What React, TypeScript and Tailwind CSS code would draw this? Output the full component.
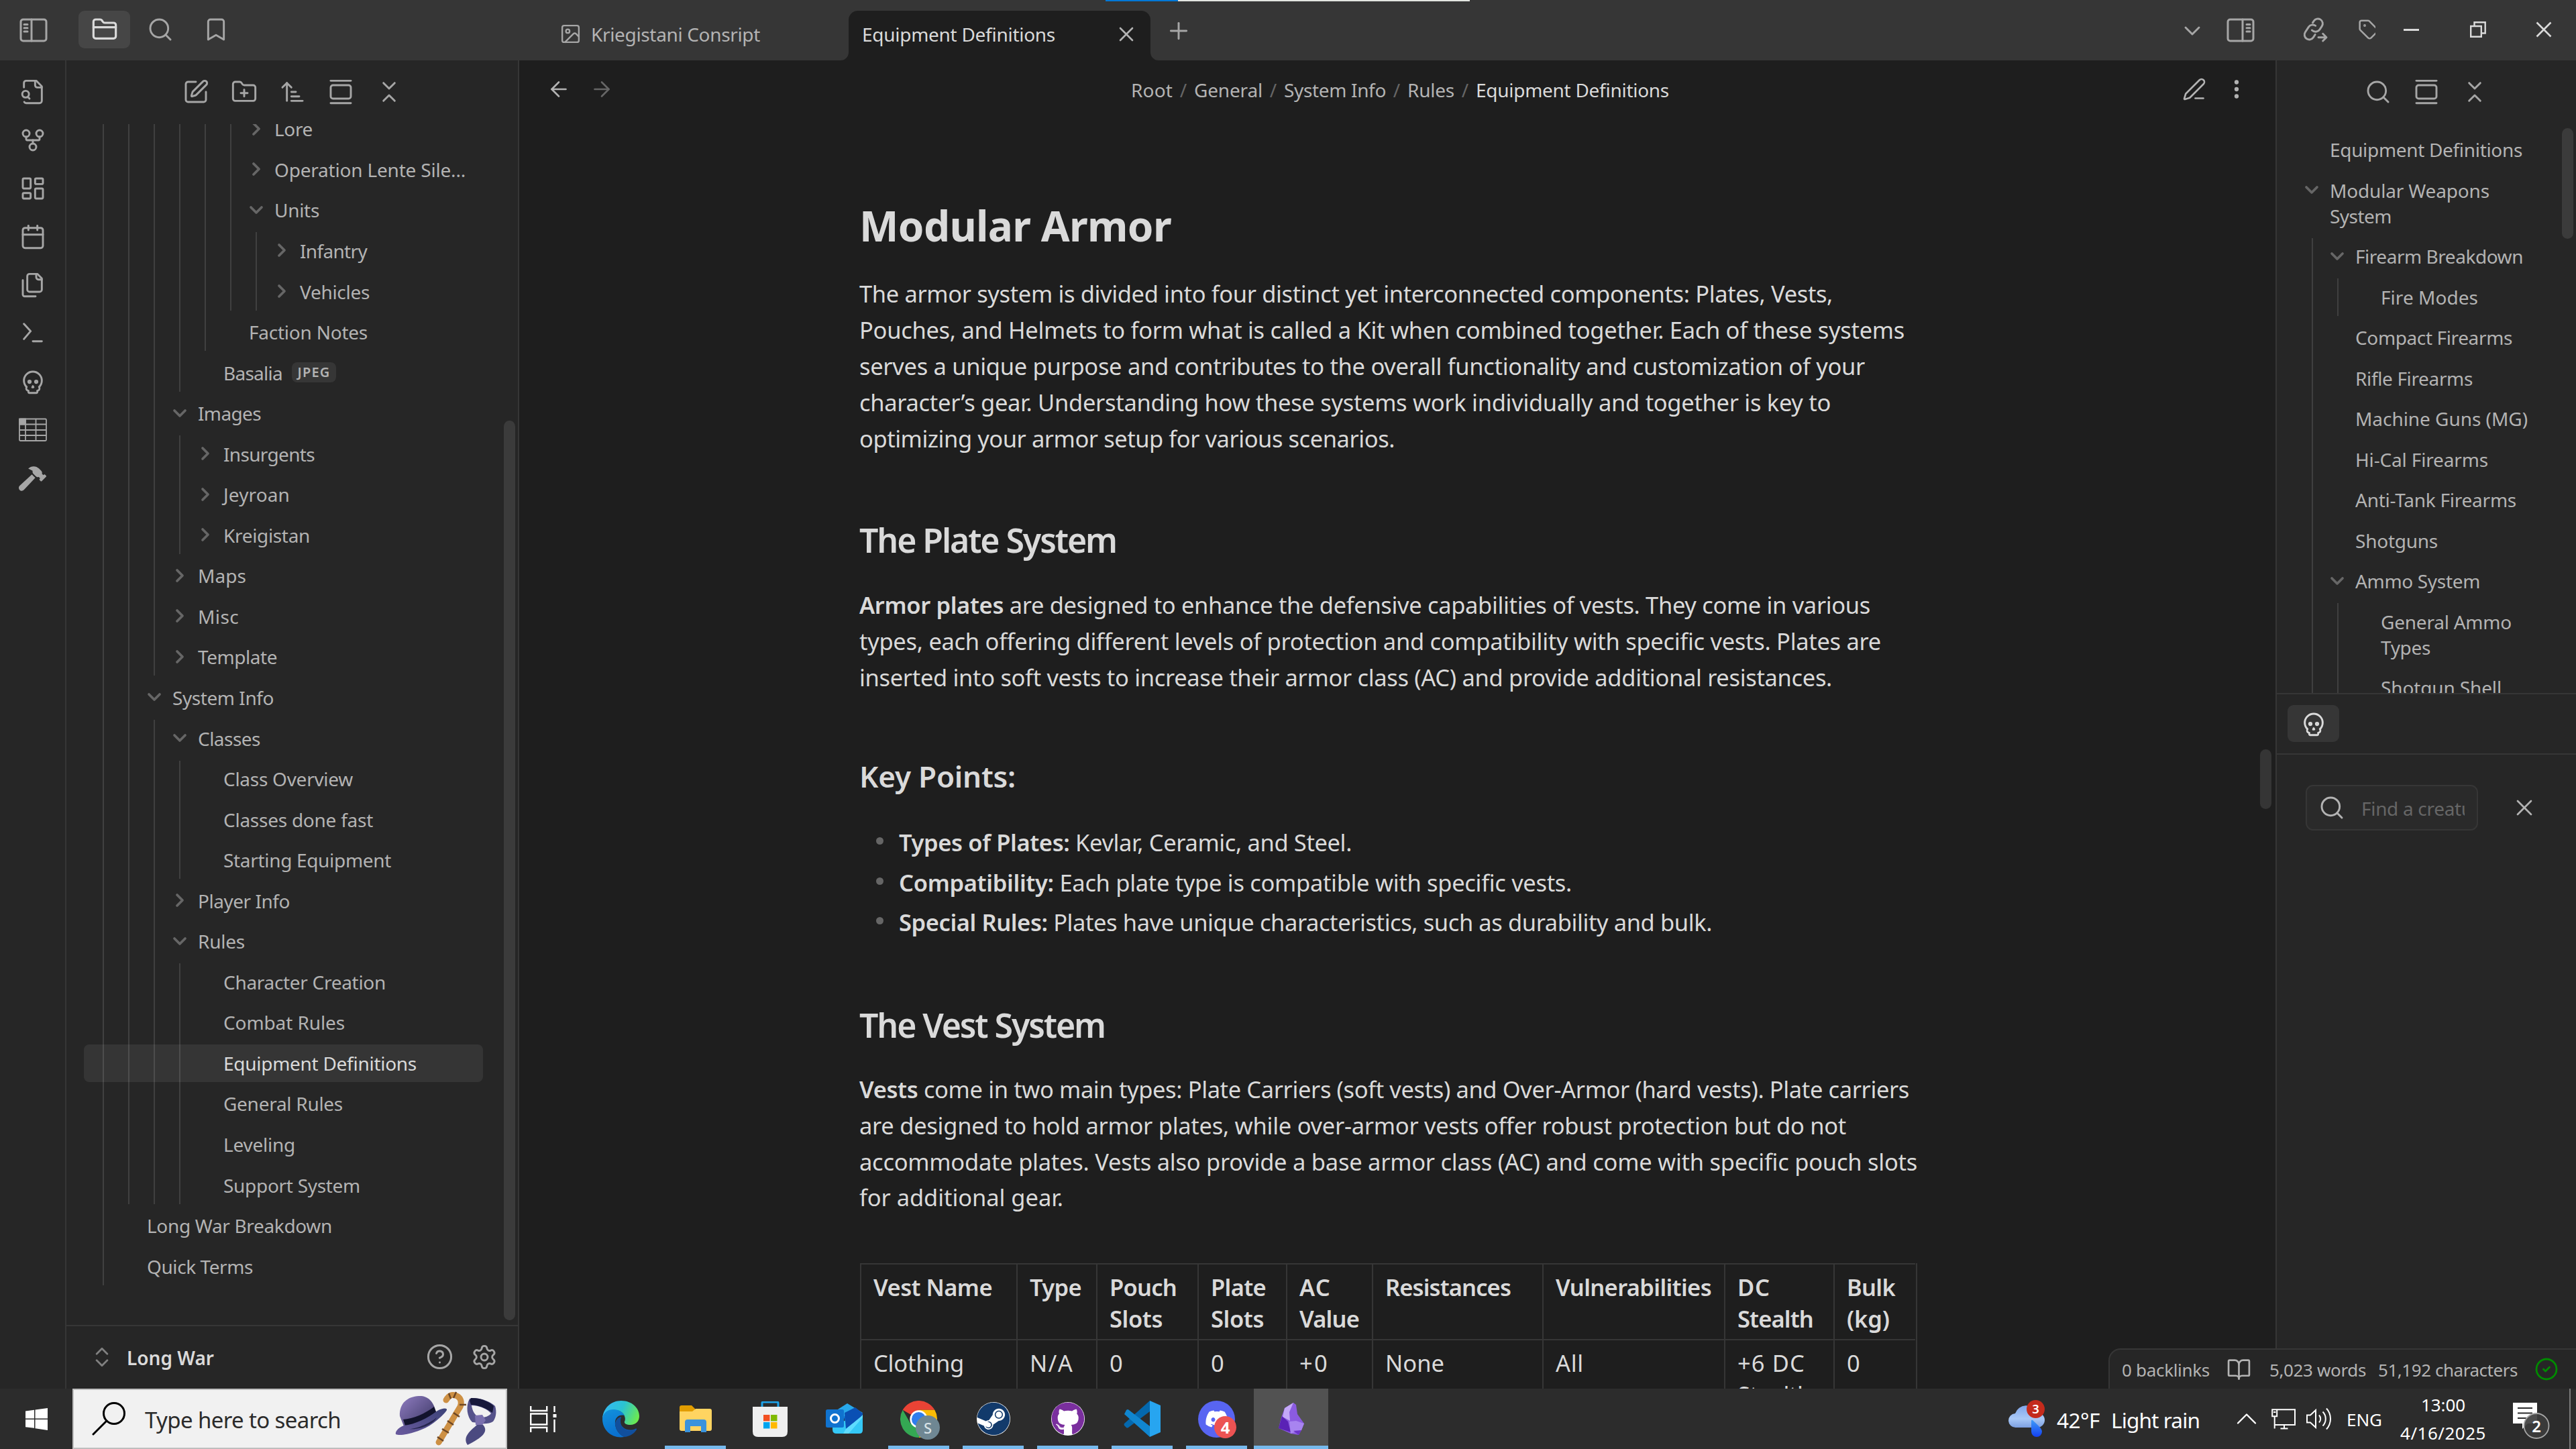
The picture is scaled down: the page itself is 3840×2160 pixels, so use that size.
import React, { useLayoutEffect, useRef, useState } from "react";
import {
  ArrowLeft, ArrowRight, ArrowUpNarrowWide, BookOpen, Bookmark, Calendar, ChevronDown, ChevronRight, ChevronUp,
  ChevronsDownUp, ChevronsUpDown, CircleCheck, CircleHelp, EllipsisVertical, FolderClosed, FolderPlus,
  GalleryVertical, GitFork, Image, LayoutDashboard, PenLine, Plus, Search, Settings, Skull, SquarePen, Tag, X,
} from "lucide-react";
import { FaDiscord, FaGithub, FaHammer, FaSteam } from "react-icons/fa";

type Kids = { children?: React.ReactNode };

/* A single line of text whose tracking is adjusted so that it fills `w` pixels. */
function Fit({ w, className = "", children }: Kids & { w: number; className?: string }) {
  const ref = useRef<HTMLSpanElement>(null);
  const [spacing, setSpacing] = useState(0);
  useLayoutEffect(() => {
    const el = ref.current;
    if (!el) return;
    el.style.letterSpacing = "0px";
    const natural = el.getBoundingClientRect().width;
    const next = (w - natural) / Math.max(1, (el.textContent ?? "").length);
    el.style.letterSpacing = `${next}px`;
    setSpacing(next);
  }, [w]);
  return (
    <span ref={ref} className={`inline-block whitespace-pre ${className}`} style={{ letterSpacing: `${spacing}px` }}>
      {children}
    </span>
  );
}

function Stroke({ size = 40, sw = 1.75, children }: Kids & { size?: number; sw?: number }) {
  return (
    <svg width={size} height={size} viewBox="0 0 24 24" fill="none" stroke="currentColor" strokeWidth={sw} strokeLinecap="round" strokeLinejoin="round">
      {children}
    </svg>
  );
}

function Cell({ className = "", children }: Kids & { className?: string }) {
  return <div className={`flex shrink-0 items-center justify-center ${className}`}>{children}</div>;
}

function PanelIcon({ right = false }: { right?: boolean }) {
  return (
    <svg width="42" height="36" viewBox="0 0 42 36" fill="none" stroke="currentColor" strokeWidth="3" strokeLinecap="round" className={right ? "-scale-x-100" : ""}>
      <rect x="2" y="2" width="38" height="32" rx="3.5" />
      <path d="M18 2v32M7 9.5h5M7 14.8h5M7 20h5" />
    </svg>
  );
}

/* ---------- title bar ---------- */

function TitleBar() {
  return (
    <header className="relative flex h-[90px] shrink-0 bg-[#363636] text-[#a6a6a6]">
      <div className="flex w-[774px] shrink-0 items-start pt-4">
        <Cell className="h-[58px] w-[99px]"><PanelIcon /></Cell>
        <div className="ml-[18px] flex gap-[6px]">
          <Cell className="h-14 w-[77px] rounded-[9px] bg-[#464646] text-[#dadada]"><FolderClosed size={40} strokeWidth={1.9} /></Cell>
          <Cell className="h-14 w-[77px]"><Search size={40} strokeWidth={1.75} /></Cell>
          <Cell className="h-14 w-[77px]"><Bookmark size={40} strokeWidth={1.75} /></Cell>
        </div>
      </div>
      <div className="flex items-start pt-4">
        <div className="flex h-[74px] w-[491px] items-center gap-[14px] pb-[5px] pl-[60px]">
          <Image size={33} strokeWidth={1.75} />
          <Fit w={252} className="pt-[1px] text-[28px] text-[#b3b3b3]">Kriegistani Consript</Fit>
        </div>
        <div className="relative flex h-[74px] w-[450px] items-center justify-between rounded-t-[14px] bg-[#1e1e1e] pr-[18px] pb-[5px] pl-[20px]">
          <Fit w={288} className="pt-[1px] text-[28px] text-[#dadada]">Equipment Definitions</Fit>
          <X size={36} strokeWidth={1.75} className="text-[#b3b3b3]" />
          <svg width="12" height="12" viewBox="0 0 12 12" className="absolute bottom-0 -left-3"><path d="M12 0v12H0A12 12 0 0 0 12 0Z" fill="#1e1e1e" /></svg>
          <svg width="12" height="12" viewBox="0 0 12 12" className="absolute -right-3 bottom-0"><path d="M0 0v12h12A12 12 0 0 1 0 0Z" fill="#1e1e1e" /></svg>
        </div>
        <Cell className="h-[60px] w-[84px]"><Plus size={40} strokeWidth={1.75} /></Cell>
      </div>
      <div className="ml-auto flex items-start pt-4">
        <Cell className="h-[60px] w-[72px]"><ChevronDown size={40} strokeWidth={1.75} /></Cell>
        <Cell className="mr-[39px] h-[58px] w-[72px]"><PanelIcon right /></Cell>
        <Cell className="mr-[28px] h-14 w-[72px]">
          <Stroke size={40}>
            <path d="M9.2 12.6a4.6 4.6 0 0 0 6.9-.5l2-3a4.3 4.3 0 1 0-7.2-4.7l-1 1.5" />
            <path d="M12.4 8.6a4.4 4.4 0 0 0-6.2 1.2l-3 4.6a4.3 4.3 0 0 0 7.2 4.7l1.7-2.6" />
            <path d="M15 19h7m-3-3.2 3.2 3.2-3.2 3.2" />
          </Stroke>
        </Cell>
        <div className="flex h-14 w-[26px] shrink-0 items-center overflow-hidden"><Tag size={32} strokeWidth={1.9} className="shrink-0" /></div>
        <Cell className="ml-[3px] h-14 w-[100px]"><div className="h-[3px] w-[23px] bg-[#dadada]" /></Cell>
        <Cell className="h-14 w-[99px]">
          <svg width="24" height="24" viewBox="0 0 24 24" fill="none" stroke="#dadada" strokeWidth="2.4"><path d="M1.2 7h15.6v15.8H1.2ZM6.5 7V1.3h16.2V17.500H17" /></svg>
        </Cell>
        <Cell className="h-14 w-[97px]">
          <svg width="24" height="24" viewBox="0 0 24 24" fill="none" stroke="#dadada" strokeWidth="2.600"><path d="m1.500 1.500 21 21m0-21-21 21" /></svg>
        </Cell>
      </div>
      <div className="absolute top-0 left-[1648px] flex h-[2px] w-[543px] bg-[#e3e5e1]"><div className="w-[108px] bg-[#0078d7]" /></div>
    </header>
  );
}

/* ---------- ribbon ---------- */

function Ribbon() {
  const icons = [
    <Stroke key="fs">
      <path d="M14 2v4a2 2 0 0 0 2 2h4" /><path d="M4.268 21a2 2 0 0 0 1.727 1H18a2 2 0 0 0 2-2V7l-5-5H6a2 2 0 0 0-2 2v4" />
      <path d="m9 18-1.500-1.500" /><circle cx="5.500" cy="14" r="3" />
    </Stroke>,
    <GitFork key="gf" size={40} strokeWidth={1.75} />,
    <LayoutDashboard key="ld" size={40} strokeWidth={1.75} />,
    <Calendar key="ca" size={40} strokeWidth={1.75} />,
    <Stroke key="fi">
      <path d="M20 7h-3a2 2 0 0 1-2-2V2" /><path d="M9 18a2 2 0 0 1-2-2V4a2 2 0 0 1 2-2h7l4 4v10a2 2 0 0 1-2 2Z" /><path d="M3 7.600v12.800A1.600 1.600 0 0 0 4.600 22h9.800" />
    </Stroke>,
    <Stroke key="te"><path d="m4 17 6-7-6-6.500M12 19h8" /></Stroke>,
    <Skull key="sk" size={40} strokeWidth={1.75} />,
    <svg key="tb" width="42" height="36" viewBox="0 0 42 36" fill="none" stroke="currentColor" strokeWidth="1.800">
      <rect x="1" y="1.500" width="40" height="32.500" rx="1.500" />
      <path d="M1 9.500h40M1 18h40M1 26h40M10 1.500v32.500M25.500 1.500v32.500" />
      <path d="M1 1.500h9v8H1Z" fill="currentColor" />
    </svg>,
    <FaHammer key="ha" size={41} />,
  ];
  return (
    <nav className="flex w-[99px] shrink-0 flex-col border-r-2 border-[#363636] bg-[#262626] pt-[11px] text-[#a6a6a6]">
      {icons.map((icon, i) => <Cell key={i} className="h-[72px] w-[97px]">{icon}</Cell>)}
    </nav>
  );
}

/* ---------- trees ---------- */

type Node = { label?: string; w?: number; lines?: [string, number][]; open?: boolean; closed?: boolean; active?: boolean; badge?: string; kids?: Node[] };

function Row({ node, depth, first, textStart, rowWidth }: { node: Node; depth: number; first: number; textStart: number; rowWidth: number }) {
  const lines: [string, number][] = node.lines ?? [[node.label ?? "", node.w ?? 0]];
  const shift = depth === 0 ? 0 : -(first + 38 * (depth - 1));
  return (
    <div
      className={`relative flex min-h-[55.500px] shrink-0 items-start rounded-[8px] ${node.active ? "bg-[#ffffff12] text-[#dadada]" : "text-[#b3b3b3]"}`}
      style={{ marginLeft: shift, paddingLeft: textStart + 38 * depth, width: rowWidth }}
    >
      {(node.open || node.closed) && (
        <div className="flex h-[54px] w-0 items-center text-[#666666]">
          <div className="-ml-[43px] flex w-8 shrink-0 justify-center">
            {node.open ? <ChevronDown size={32} strokeWidth={2.8} className="shrink-0" /> : <ChevronRight size={32} strokeWidth={2.8} className="shrink-0" />}
          </div>
        </div>
      )}
      <div className="flex flex-col items-start pt-[8.500px] pb-[8.500px]">
        {lines.map(([text, w]) => <Fit key={text} w={w} className="text-[28px] leading-[38.200px]">{text}</Fit>)}
      </div>
      {node.badge && (
        <div className="mt-[12px] ml-[14px] flex h-[30px] w-[66px] items-center justify-center rounded-[8px] bg-[#363636]">
          <Fit w={49} className="text-[20px] leading-[30px] font-semibold">{node.badge}</Fit>
        </div>
      )}
    </div>
  );
}

function Tree({ nodes, depth, first, textStart, rowWidth, guideStart }: { nodes: Node[]; depth: number; first: number; textStart: number; rowWidth: number; guideStart: number }) {
  return (
    <>
      {nodes.map((n, i) => (
        <React.Fragment key={i}>
          {(n.label || n.lines) && <Row node={n} depth={depth} first={first} textStart={textStart} rowWidth={rowWidth} />}
          {n.kids && (
            <div
              className="flex shrink-0 flex-col gap-[5.050px] border-l-2 border-[#ffffff1f]"
              style={{ marginLeft: depth === 0 ? guideStart : 36 }}
            >
              <Tree nodes={n.kids} depth={depth + 1} first={first} textStart={textStart} rowWidth={rowWidth} guideStart={guideStart} />
            </div>
          )}
        </React.Fragment>
      ))}
    </>
  );
}

const files: Node[] = [{
  kids: [
    {
      kids: [
        {
          kids: [
            {
              kids: [
                {
                  kids: [
                    {
                      kids: [
                        { label: "Lore", w: 57, closed: true },
                        { label: "Operation Lente Sile...", w: 285, closed: true },
                        { label: "Units", w: 67, open: true, kids: [{ label: "Infantry", w: 100, closed: true }, { label: "Vehicles", w: 104, closed: true }] },
                      ],
                    },
                    { label: "Faction Notes", w: 177 },
                  ],
                },
                { label: "Basalia", w: 88, badge: "JPEG" },
              ],
            },
            { label: "Images", w: 94, open: true, kids: [{ label: "Insurgents", w: 136, closed: true }, { label: "Jeyroan", w: 99, closed: true }, { label: "Kreigistan", w: 129, closed: true }] },
            { label: "Maps", w: 72, closed: true },
            { label: "Misc", w: 61, closed: true },
            { label: "Template", w: 118, closed: true },
          ],
        },
        {
          label: "System Info", w: 151, open: true,
          kids: [
            { label: "Classes", w: 93, open: true, kids: [{ label: "Class Overview", w: 193 }, { label: "Classes done fast", w: 223 }, { label: "Starting Equipment", w: 250 }] },
            { label: "Player Info", w: 137, closed: true },
            {
              label: "Rules", w: 70, open: true,
              kids: [
                { label: "Character Creation", w: 242 }, { label: "Combat Rules", w: 181 }, { label: "Equipment Definitions", w: 288, active: true },
                { label: "General Rules", w: 178 }, { label: "Leveling", w: 107 }, { label: "Support System", w: 204 },
              ],
            },
          ],
        },
      ],
    },
    { label: "Long War Breakdown", w: 276 },
    { label: "Quick Terms", w: 158 },
  ],
}];

const outline: Node[] = [
  { label: "Equipment Definitions", w: 287 },
  {
    lines: [["Modular Weapons", 238], ["System", 92]], open: true,
    kids: [
      { label: "Firearm Breakdown", w: 250, open: true, kids: [{ label: "Fire Modes", w: 145 }] },
      { label: "Compact Firearms", w: 234 },
      { label: "Rifle Firearms", w: 175 },
      { label: "Machine Guns (MG)", w: 257 },
      { label: "Hi-Cal Firearms", w: 198 },
      { label: "Anti-Tank Firearms", w: 240 },
      { label: "Shotguns", w: 123 },
      { label: "Ammo System", w: 186, open: true, kids: [{ lines: [["General Ammo", 195], ["Types", 74]] }, { label: "Shotgun Shell", w: 180 }] },
    ],
  },
];

function FileExplorer() {
  return (
    <aside className="flex w-[675px] shrink-0 flex-col border-r-2 border-[#363636] bg-[#262626] text-[#a6a6a6]">
      <div className="flex h-[95px] shrink-0 items-start justify-center pt-[11px] pr-0">
        {[SquarePen, FolderPlus, ArrowUpNarrowWide, GalleryVertical, ChevronsDownUp].map((I, i) => (
          <Cell key={i} className="h-[72px] w-[72px]"><I size={40} strokeWidth={1.75} /></Cell>
        ))}
      </div>
      <div className="relative h-[1790px] shrink-0 overflow-hidden">
        <div className="-mt-[20.200px] flex flex-col gap-[5.050px]">
          <Tree nodes={files} depth={0} first={30} textStart={56} rowWidth={595} guideStart={54} />
        </div>
        <div className="absolute top-[442px] right-1 h-[1341px] w-[17px] rounded-full bg-[#3b3b3b]" />
      </div>
      <div className="flex flex-1 items-center border-t-2 border-[#363636] pr-[30px] pb-[2px] pl-[34px]">
        <ChevronsUpDown size={38} strokeWidth={1.75} className="text-[#808080]" />
        <Fit w={130} className="ml-[18px] pt-[3px] text-[28px] font-semibold text-[#dadada]">Long War</Fit>
        <CircleHelp size={41} strokeWidth={1.75} className="ml-auto" />
        <Settings size={40} strokeWidth={1.75} className="ml-[26px]" />
      </div>
    </aside>
  );
}

/* ---------- note ---------- */

const crumbs: [string, number][] = [["Root", 62], ["General", 102], ["System Info", 152], ["Rules", 70]];

const vestColumns: { head: [string, number][]; cell: [string, number][] }[] = [
  { head: [["Vest Name", 177]], cell: [["Clothing", 135]] },
  { head: [["Type", 77]], cell: [["N/A", 65]] },
  { head: [["Pouch", 100], ["Slots", 79]], cell: [["0", 20]] },
  { head: [["Plate", 82], ["Slots", 79]], cell: [["0", 20]] },
  { head: [["AC", 47], ["Value", 89]], cell: [["+0", 44]] },
  { head: [["Resistances", 187]], cell: [["None", 88]] },
  { head: [["Vulnerabilities", 232]], cell: [["All", 42]] },
  { head: [["DC", 49], ["Stealth", 113]], cell: [["+6 DC", 101], ["Stealth", 110]] },
  { head: [["Bulk", 72], ["(kg)", 64]], cell: [["0", 20]] },
];

function Lines({ items, className = "" }: { items: [React.ReactNode, number][]; className?: string }) {
  return (
    <p className={`flex flex-col items-start text-[34.500px] leading-[53.900px] ${className}`}>
      {items.map(([t, w], i) => <Fit key={i} w={w}>{t}</Fit>)}
    </p>
  );
}

const B = ({ children }: Kids) => <strong className="font-semibold">{children}</strong>;

function TableRow({ kind }: { kind: "head" | "cell" }) {
  return (
    <div className={`grid h-[113px] grid-cols-[233px_119px_151px_132px_128px_254px_271px_163px_122px] ${kind === "head" ? "font-semibold" : ""}`}>
      {vestColumns.map((c, i) => (
        <div key={i} className="flex flex-col items-start border-t-2 border-l-2 border-[#363636] pt-[10px] pl-[18px]">
          {c[kind].map(([t, w]) => <Fit key={t} w={w} className="leading-[47px]">{t}</Fit>)}
        </div>
      ))}
    </div>
  );
}

function Note() {
  return (
    <main className="flex w-[2618px] shrink-0 flex-col overflow-hidden bg-[#1e1e1e] text-[#dadada]">
      <div className="relative flex h-[88px] shrink-0 items-center justify-center text-[28px] text-[#b3b3b3]">
        <div className="absolute inset-y-0 left-[41px] flex items-center gap-[28px] pb-[3px]">
          <ArrowLeft size={36} strokeWidth={1.75} />
          <ArrowRight size={36} strokeWidth={1.75} className="text-[#666666]" />
        </div>
        <div className="flex items-center pb-[1px] pl-[8px]">
          {crumbs.map(([t, w]) => (
            <React.Fragment key={t}>
              <Fit w={w}>{t}</Fit>
              <span className="w-[32px] text-center text-[#666666]">/</span>
            </React.Fragment>
          ))}
          <Fit w={288} className="text-[#dadada]">Equipment Definitions</Fit>
        </div>
        <div className="absolute inset-y-0 right-[40px] flex items-center gap-[27px] pb-[3px]">
          <PenLine size={36} strokeWidth={1.75} />
          <EllipsisVertical size={36} strokeWidth={2.2} />
        </div>
      </div>
      <div className="relative flex-1">
        <article className="ml-[507px] w-[1600px]">
          <h1 className="pt-[119.700px] text-[62px] leading-[76px] font-bold"><Fit w={465}>Modular Armor</Fit></h1>
          <Lines className="mt-[37.800px]" items={[
            ["The armor system is divided into four distinct yet interconnected components: Plates, Vests,", 1451],
            ["Pouches, and Helmets to form what is called a Kit when combined together. Each of these systems", 1558],
            ["serves a unique purpose and contributes to the overall functionality and customization of your", 1499],
            ["character’s gear. Understanding how these systems work individually and together is key to", 1448],
            ["optimizing your armor setup for various scenarios.", 798],
          ]} />
          <h2 className="mt-[93.900px] text-[50px] leading-[60px] font-semibold"><Fit w={383}>The Plate System</Fit></h2>
          <Lines className="mt-[39.800px]" items={[
            [<><B>Armor plates</B> are designed to enhance the defensive capabilities of vests. They come in various</>, 1507],
            ["types, each offering different levels of protection and compatibility with specific vests. Plates are", 1523],
            ["inserted into soft vests to increase their armor class (AC) and provide additional resistances.", 1450],
          ]} />
          <h3 className="mt-[93.800px] text-[44px] leading-[54px] font-semibold"><Fit w={233}>Key Points:</Fit></h3>
          <ul className="mt-[41.900px] text-[34.500px] leading-[59.700px]">
            {([["Types of Plates:", " Kevlar, Ceramic, and Steel.", 675], ["Compatibility:", " Each plate type is compatible with specific vests.", 1003], ["Special Rules:", " Plates have unique characteristics, such as durability and bulk.", 1212]] as [string, string, number][]).map(([b, t, w]) => (
              <li key={b} className="flex h-[59.700px] items-start">
                <span className="mt-[22px] mr-[23px] ml-[25px] size-[11px] rounded-full bg-[#666666]" />
                <Fit w={w}><B>{b}</B>{t}</Fit>
              </li>
            ))}
          </ul>
          <h2 className="mt-[92.500px] text-[50px] leading-[60px] font-semibold"><Fit w={366}>The Vest System</Fit></h2>
          <Lines className="mt-[39.100px]" items={[
            [<><B>Vests</B> come in two main types: Plate Carriers (soft vests) and Over-Armor (hard vests). Plate carriers</>, 1565],
            ["are designed to hold armor plates, while over-armor vests offer robust protection but do not", 1471],
            ["accommodate plates. Vests also provide a base armor class (AC) and come with specific pouch slots", 1577],
            ["for additional gear.", 304],
          ]} />
          <div className="mt-[70.600px] ml-[1px] w-[1576px] border-r-2 border-[#363636] text-[34.500px]">
            <TableRow kind="head" />
            <TableRow kind="cell" />
          </div>
        </article>
        <div className="absolute top-[939px] right-[6px] h-[89px] w-[17px] rounded-full bg-[#353535]" />
      </div>
    </main>
  );
}

/* ---------- right sidebar ---------- */

function RightPanel() {
  return (
    <aside className="flex flex-1 flex-col overflow-hidden border-l-2 border-[#363636] bg-[#262626] text-[#a6a6a6]">
      <div className="flex h-[95px] shrink-0 items-start pt-[11px] pl-[115px]">
        {[Search, GalleryVertical, ChevronsDownUp].map((I, i) => (
          <Cell key={i} className="h-[72px] w-[72px]"><I size={40} strokeWidth={1.75} /></Cell>
        ))}
      </div>
      <div className="relative h-[848px] shrink-0 overflow-hidden">
        <div className="flex flex-col gap-[5.050px] pt-[10.500px]">
          <Tree nodes={outline} depth={0} first={54} textStart={79} rowWidth={420} guideStart={52} />
        </div>
        <div className="absolute top-[6px] right-1 h-[165px] w-[17px] rounded-full bg-[#3b3b3b]" />
      </div>
      <div className="flex h-[92px] shrink-0 items-center border-y-2 border-[#363636] pb-[1px] pl-4">
        <Cell className="h-[55px] w-[77px] rounded-[9px] bg-[#363636] text-[#dadada]"><Skull size={40} strokeWidth={1.75} /></Cell>
      </div>
      <div className="flex items-center pt-[45px] pl-[43px]">
        <div className="flex h-[68px] w-[257px] items-center rounded-[11px] border-2 border-[#363636] bg-[#2a2a2a] pl-[17px]">
          <Search size={40} strokeWidth={1.75} className="shrink-0 text-[#b3b3b3]" />
          <div className="ml-[24px] w-[154px] overflow-hidden pt-[2px] text-[28px] text-[#666666]"><Fit w={192}>Find a creature</Fit></div>
        </div>
        <Cell className="ml-[49px] w-[40px]"><X size={40} strokeWidth={1.6} className="text-[#b3b3b3]" /></Cell>
      </div>
    </aside>
  );
}

function StatusBar() {
  return (
    <div className="absolute right-0 bottom-0 flex h-[60px] w-[697px] items-center rounded-tl-[18px] border-t-2 border-l-2 border-[#363636] bg-[#262626] pl-[18px] text-[26px] text-[#b3b3b3]">
      <Fit w={131} className="pt-[2px]">0 backlinks</Fit>
      <BookOpen size={37} strokeWidth={1.75} className="ml-[25px]" />
      <Fit w={144} className="ml-[27px] pt-[2px]">5,023 words</Fit>
      <Fit w={208} className="ml-[18px] pt-[2px]">51,192 characters</Fit>
      <CircleCheck size={36} strokeWidth={1.9} className="ml-[25px] text-[#008a00]" />
    </div>
  );
}

/* ---------- taskbar ---------- */

function SearchArt() {
  return (
    <svg width="154" height="84" viewBox="0 0 154 84">
      <defs>
        <linearGradient id="hat" x1="0" y1="0" x2="1" y2="1"><stop offset="0" stopColor="#8f7cc0" /><stop offset="1" stopColor="#34315c" /></linearGradient>
        <linearGradient id="brim" x1="0" y1="1" x2="1" y2="0"><stop offset="0" stopColor="#6a5a9e" /><stop offset="1" stopColor="#3c4378" /></linearGradient>
      </defs>
      <path d="M8 38C7 18 20 9 36 8c12-1 22 6 26 24L16 58Z" fill="url(#hat)" />
      <path d="m13 43 4 12c16-1 34-10 46-21l-4-10C46 34 28 42 13 43Z" fill="#12132c" />
      <path d="M14 52C4 56 1 62 2 65c9 4 39-5 52-14 12-8 22-18 24-22 1-4-7-3-14 1-16 12-33 20-50 22Z" fill="url(#brim)" />
      <path d="M22 57c13 0 33-10 41-17-4 9-24 19-41 17Z" fill="#27274f" />
      <path d="M66 77 98 24C104 10 88 2 81 9q-3 3-4 5" fill="none" stroke="#cd9044" strokeWidth="9" strokeLinecap="round" />
      <path d="m64 69 9 6m-2-18 10 6m-2-18 9 6m0-18 9 6m0-18h10M92 2l-4 9M81 4l3 8" stroke="#6d4725" strokeWidth="2.500" />
      <path d="M112 12c14-3 32 5 38 11 3 9 1 18-3 23-6 4-16 4-22 2l-9-1c-8-8-10-24-4-35Z" fill="#55528a" />
      <path d="M114 11c13-1 29 6 34 12l-2 10c-8-6-22-12-32-12l-2-6Z" fill="#17183a" />
      <path d="M115 22c12 0 24 6 29 12-4 5-12 7-18 6-6-3-10-10-11-18Z" fill="#f1f1f1" />
      <path d="m120 37 11-1 5 8-6 9-9-2Z" fill="#7a70ae" />
      <path d="M123 51h9c9 10-1 19-23 30-8-12 4-21 14-30Z" fill="#4b4a80" />
    </svg>
  );
}

function Slot({ running, active, children }: Kids & { running?: boolean; active?: boolean }) {
  return (
    <div className={`relative flex h-[90px] w-[111px] shrink-0 items-center justify-center ${active ? "bg-[#525252]" : ""}`}>
      {children}
      {running && <div className={`absolute bottom-0 h-[5px] bg-[#76b9ed] ${active ? "w-[111px]" : "w-[91px]"}`} />}
    </div>
  );
}

function EdgeIcon() {
  return (
    <svg width="55" height="55" viewBox="0 0 55 55">
      <defs>
        <linearGradient id="e1" x1="0" y1="0.300" x2="1" y2="0.600"><stop offset="0" stopColor="#35b8f3" /><stop offset="0.500" stopColor="#2bc3d2" /><stop offset="1" stopColor="#6cea4e" /></linearGradient>
        <linearGradient id="e2" x1="0" y1="0" x2="0.300" y2="1"><stop offset="0" stopColor="#1292dc" /><stop offset="1" stopColor="#0a70cf" /></linearGradient>
      </defs>
      <path d="M0 27C1 11 13 0 28 0c16 0 27 11 27 23 0 8-6 13-13 13-6 0-10-2-9-5 2-3 1-11-6-15C16 10 3 16 0 27Z" fill="url(#e1)" />
      <path d="M0 27c1-10 9-14 16-14 9 0 15 5 17 9-9-2-15 4-14 13 1 10 8 17 14 19C15 57 0 45 0 27Z" fill="url(#e2)" />
      <path d="M28 24c-9 4-9 13-4 19 7 8 19 8 26 1 2-2 1-3-1-2-9 4-22 0-22-11 0-3 0-5 1-7Z" fill="#1155a8" />
      <path d="M19 35c1 10 8 17 14 19 9-1 15-6 18-11-10 5-22 1-24-9-1-4 0-7 1-10-5 1-9 5-9 11Z" fill="#114f9c" />
    </svg>
  );
}

function Taskbar() {
  return (
    <footer className="flex h-[90px] shrink-0 bg-[#2c2c2c] text-white">
      <Cell className="w-[108px]">
        <svg width="33" height="33" viewBox="0 0 33 33" fill="#fff"><path d="M0 4.500 13 2.800V15.500H0ZM14.500 2.600 33 0V15.500H14.500ZM0 17H13V29.800L0 28.200ZM14.500 17H33V33L14.500 30.200Z" /></svg>
      </Cell>
      <div className="flex w-[648px] items-center border-2 border-[#bebebe] bg-[#f1f1f1] pl-[27px] text-[#2b2b2b]">
        <svg width="52" height="52" viewBox="0 0 52 52" fill="none" stroke="#000" strokeWidth="3"><circle cx="33" cy="18" r="15.500" /><path d="M22 29 2 49" strokeLinecap="round" /></svg>
        <Fit w={292} className="ml-[27px] pt-[3px] text-[33px]">Type here to search</Fit>
        <div className="ml-auto pr-3"><SearchArt /></div>
      </div>
      <Cell className="w-[114px] pr-[6px]">
        <svg width="40" height="40" viewBox="0 0 40 40" fill="none" stroke="#fff" strokeWidth="2.400">
          <path d="M1.200 1v7h24V1M1.200 12.500h24v16h-24ZM1.200 40v-7h24v7M36.500 1v9M36.500 21v19" /><rect x="34.500" y="13" width="5" height="5" fill="#fff" stroke="none" />
        </svg>
      </Cell>
      <Slot><EdgeIcon /></Slot>
      <Slot running>
        <svg width="48" height="41" viewBox="0 0 48 41">
          <path d="M0 3q0-3 3-3h15l5 5v8H0Z" fill="#e19d00" /><path d="M0 9h19l5-4h21q3 0 3 3v27q0 3-3 3H3q-3 0-3-3Z" fill="#ffd461" />
          <path d="M8 40V25q0-4 4-4h24q4 0 4 4v15h-8v-9H16v9Z" fill="#3b93dc" />
        </svg>
      </Slot>
      <Slot>
        <svg width="52" height="53" viewBox="0 0 52 53">
          <path d="M14 11V2.500q0-1.500 1.500-1.500h21q1.500 0 1.500 1.500V11" fill="none" stroke="#1ea3ea" strokeWidth="3" />
          <path d="M0 8h52v37q0 8-8 8H8q-8 0-8-8Z" fill="#efefef" />
          <path d="M16 20h9.500v9.500H16Z" fill="#f25022" /><path d="M27 20h9.500v9.500H27Z" fill="#7fba00" /><path d="M16 31h9.500v9.500H16Z" fill="#00a4ef" /><path d="M27 31h9.500v9.500H27Z" fill="#ffb900" />
        </svg>
      </Slot>
      <Slot>
        <svg width="55" height="46" viewBox="0 0 55 46">
          <path d="M10 14 32 0l23 14v8H10Z" fill="#28a8ea" /><path d="m27 20 17-13 11 8v8L30 36Z" fill="#0f6fd0" /><path d="m28 34 27-20v8L30 38Z" fill="#0a3f94" />
          <path d="M10 32 55 17v23q0 5-5 5H16q-6 0-6-6Z" fill="#35c8f6" />
          <path d="M28 14 44 6l11 9v4L30 38Z" fill="#0a50b4" />
          <path d="m30 38 22-18 3-3v4L34 45h-8Z" fill="#5fdcff" />
          <rect y="9" width="27" height="27" rx="2.500" fill="#1073cf" /><circle cx="13.500" cy="22.500" r="6" fill="none" stroke="#fff" strokeWidth="3" />
        </svg>
      </Slot>
      <Slot running>
        <svg width="55" height="55" viewBox="0 0 48 48">
          <path d="M24 24 3.200 12A24 24 0 0 1 44.800 12H24Z" fill="#ea4335" /><path d="M24 24V12h20.800A24 24 0 0 1 24 48l10.400-18Z" fill="#fbbc05" /><path d="M24 24 34.400 30 24 48A24 24 0 0 1 3.200 12L13.600 30Z" fill="#34a853" />
          <circle cx="24" cy="24" r="11.500" fill="#fff" /><circle cx="24" cy="24" r="9.200" fill="#2f7ded" />
        </svg>
        <div className="absolute top-[40px] left-[51px] flex size-[36px] items-center justify-center rounded-full bg-[#6f8793] text-[22px] font-medium text-[#d8e2e6]">S</div>
      </Slot>
      <Slot running><div className="rounded-full bg-white bg-clip-content p-px"><FaSteam size={50} color="#123a6b" /></div></Slot>
      <Slot running><div className="rounded-full bg-white bg-clip-content p-px"><FaGithub size={50} color="#7a2f9e" /></div></Slot>
      <Slot running>
        <svg width="55" height="54" viewBox="0 0 55 54">
          <path d="M1 34 39 0v16L7 40q-2 1-3 0l-3-3q-1-2 0-3Z" fill="#0468ae" /><path d="M1 20 4 14q2-2 4 0l31 24v16L1 20Z" fill="#1086d0" /><path d="M39 0 55 7v40l-16 7V0Z" fill="#27a5f0" />
        </svg>
      </Slot>
      <Slot running>
        <div className="flex size-[55px] items-center justify-center rounded-full bg-[#5865f2]"><FaDiscord size={36} color="#fff" /></div>
        <div className="absolute top-[41px] left-[52px] flex size-[33px] items-center justify-center rounded-full bg-[#ec5353] text-[24px] font-bold">4</div>
      </Slot>
      <Slot running active>
        <svg width="38" height="49" viewBox="0 0 38 49">
          <path d="M9 8 22 0l4 3 2 14 10 14-4 10-4 7-12-2L0 38 4 22Z" fill="#8b5be0" /><path d="M9 8 22 0l-6 14 1 13-11-6Z" fill="#c4a8f8" /><path d="m5 20 9 8 4 16L0 38Z" fill="#5a22b5" /><path d="m16 28 10-1 12 4-4 10-16 5Z" fill="#a884f0" /><path d="m22 42 12-1-4 7Z" fill="#6b35c8" />
        </svg>
      </Slot>

      <div className="ml-auto flex items-center">
        <svg width="56" height="56" viewBox="0 0 56 56" className="overflow-visible">
          <defs>
            <linearGradient id="cl" x1="0" y1="0" x2="0" y2="1"><stop offset="0" stopColor="#7fa6ea" /><stop offset="0.600" stopColor="#a9c8f6" /><stop offset="1" stopColor="#7c9fe0" /></linearGradient>
            <linearGradient id="dr" x1="0" y1="0" x2="0" y2="1"><stop offset="0" stopColor="#3f9cf8" /><stop offset="1" stopColor="#1440f0" /></linearGradient>
          </defs>
          <path d="M11 37a10.500 10.500 0 1 1-1-21A17 17 0 0 1 42 15c8 0 12 5 12 11s-5 11-11 11Z" fill="url(#cl)" transform="translate(-1 4)" />
          <path d="M33 31q0-2 2-1c6 6 14 12 14 17a8 8 0 0 1-16 0Z" fill="url(#dr)" />
          <circle cx="39.500" cy="13.500" r="13.500" fill="#c42b1c" />
          <text x="39.500" y="20" fontSize="18.500" fontWeight="600" textAnchor="middle" fill="#fff">3</text>
        </svg>
        <Fit w={64} className="ml-[15px] pt-[3px] text-[31.500px]">42°F</Fit>
        <Fit w={132} className="ml-[17px] pt-[3px] text-[31.500px]">Light rain</Fit>
        <ChevronUp size={52} strokeWidth={1.1} className="ml-[44px]" />
        <svg width="36" height="31" viewBox="0 0 36 31" fill="none" stroke="#fff" strokeWidth="2" className="ml-[11px]">
          <path d="M8.500 1.200H35V24H5M1.200 1.200h7v10h-7ZM4.700 11.200V29.500M3 5h3.500M19 24v5.500M13.500 29.500h11" />
        </svg>
        <svg width="38" height="36" viewBox="0 0 38 36" fill="none" stroke="#fff" strokeWidth="2" className="ml-[16px]">
          <path d="M1 12.500h5L14 5v26l-8-7.500H1ZM19 12.500a8 8 0 0 1 0 11M24.500 7.500a15 15 0 0 1 0 21M30 2.500a23 23 0 0 1 0 31" />
        </svg>
        <Fit w={53} className="ml-[22px] pt-[2px] text-[26px]">ENG</Fit>
        <div className="ml-[26px] flex w-[130px] flex-col items-center text-[26px] leading-[42px]">
          <Fit w={66}>13:00</Fit>
          <Fit w={128}>4/16/2025</Fit>
        </div>
        <svg width="56" height="56" viewBox="0 0 56 56" className="mt-[6px] ml-[39px]">
          <path d="M0 1h36v31H22l-8 8v-8H0Z" fill="#fff" />
          <path d="M7 9h22M7 16.500h22M7 24h14" stroke="#2c2c2c" strokeWidth="2" />
          <circle cx="35" cy="35.500" r="18.500" fill="#3b3b3be8" stroke="#a5a5a5" strokeWidth="1.800" />
          <text x="35" y="44.500" fontSize="24" fontWeight="600" textAnchor="middle" fill="#fff">2</text>
        </svg>
        <div className="mr-[8px] ml-[28px] h-[90px] w-[2px] bg-[#7a7a7a]" />
      </div>
    </footer>
  );
}

export default function App() {
  return (
    <div className="flex h-[2160px] w-[3840px] flex-col overflow-hidden bg-[#1e1e1e] font-['Noto_Sans','Open_Sans',sans-serif] leading-normal">
      <TitleBar />
      <div className="relative flex h-[1980px] shrink-0 overflow-hidden">
        <Ribbon />
        <FileExplorer />
        <Note />
        <RightPanel />
        <StatusBar />
      </div>
      <Taskbar />
    </div>
  );
}
